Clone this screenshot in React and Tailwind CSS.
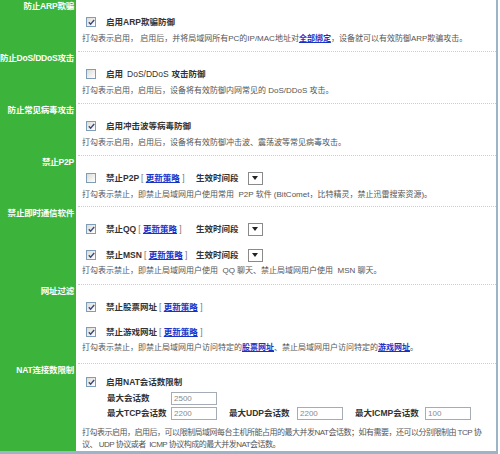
import React from 'react';

const font = "font-['Liberation_Sans','Noto_Sans_CJK_SC',sans-serif]";

const Check = ({ checked }) => (
  <span className="w-[10px] h-[10px] shrink-0 border border-[#7f9db9] bg-gradient-to-br from-[#dcdcd6] to-[#ffffff] flex items-center justify-center">
    {checked && (
      <svg width="7" height="7" viewBox="0 0 7 7">
        <path d="M0.8 3.2 L2.6 5.2 L6.2 1" fill="none" stroke="#3a4a7a" strokeWidth="1.4" />
      </svg>
    )}
  </span>
);

const Policy = () => (
  <span className="text-[#777] font-normal ml-[2px] whitespace-nowrap">
    [ <a className="text-[#1633c6] underline font-bold">更新策略</a> ]
  </span>
);

const Select = () => (
  <span className="w-[15px] h-[13px] border border-[#8a8a8a] bg-white flex items-center justify-center">
    <svg width="6" height="4" viewBox="0 0 6 4">
      <path d="M0 0 L6 0 L3 4 Z" fill="#222" />
    </svg>
  </span>
);

const Input = ({ value }) => (
  <span className="w-[46px] h-[13px] border border-[#a5acb5] bg-white text-[#8a8a8a] text-[8px] leading-[11px] pl-[2px] font-normal">
    {value}
  </span>
);

const Row = ({ checked, children, className = '' }) => (
  <div className={`h-[16px] flex items-center pl-[4px] whitespace-nowrap ${className}`}>
    <Check checked={checked} />
    <div className="ml-[10px] flex items-center font-bold text-[#333] text-[8.5px]">{children}</div>
  </div>
);

const Desc = ({ children, className = '' }) => (
  <div className={`text-[8px] leading-[12px] text-[#555] ${className}`}>{children}</div>
);

const Label = ({ children }) => (
  <div className="w-[76px] shrink-0 bg-[#3cb43c] text-right pr-[2px] text-white font-bold text-[8.5px] leading-[12px] whitespace-nowrap tracking-[-0.2px]">
    {children}
  </div>
);

const Section = ({ label, height, children }) => (
  <div className={`flex ${height}`}>
    <Label>{label}</Label>
    <div className="flex-1 ml-[2px] border-b border-dotted border-[#c2d4c8] pl-[4px] pr-[4px] pt-[14px]">
      {children}
    </div>
  </div>
);

const Named = ({ children }) => <span className="w-[90px] flex items-center">{children}</span>;

const TimeSel = () => (
  <div className="flex items-center">
    <span className="mr-[9px]">生效时间段</span>
    <Select />
  </div>
);

export default function App() {
  return (
    <div className={`w-[498px] h-[454px] bg-white border-r-2 border-b-[3px] border-[#9db3c6] overflow-hidden ${font}`}>
      <Section label="防止ARP欺骗" height="h-[52px]">
        <Row checked>启用ARP欺骗防御</Row>
        <Desc className="mt-[3px]">
          打勾表示启用， 启用后，并将局域网所有PC的IP/MAC地址对<a className="text-[#1633c6] underline font-bold">全部绑定</a>，设备就可以有效防御ARP欺骗攻击。
        </Desc>
      </Section>
      <Section label="防止DoS/DDoS攻击" height="h-[52px]">
        <Row>
          启用 <span className="font-normal ml-[4px] mr-[3px]">DoS/DDoS</span> 攻击防御
        </Row>
        <Desc className="mt-[3px]">打勾表示启用，启用后，设备将有效防御内网常见的 DoS/DDoS 攻击。</Desc>
      </Section>
      <Section label="防止常见病毒攻击" height="h-[52px]">
        <Row checked>启用冲击波等病毒防御</Row>
        <Desc className="mt-[3px]">打勾表示启用，启用后，设备将有效防御冲击波、震荡波等常见病毒攻击。</Desc>
      </Section>
      <Section label="禁止P2P" height="h-[51px]">
        <Row>
          <Named>禁止P2P<Policy /></Named>
          <TimeSel />
        </Row>
        <Desc className="mt-[3px]">打勾表示禁止，即禁止局域网用户使用常用&nbsp; P2P 软件 (BitComet，比特精灵，禁止迅雷搜索资源)。</Desc>
      </Section>
      <Section label="禁止即时通信软件" height="h-[78px]">
        <Row checked>
          <Named>禁止QQ<Policy /></Named>
          <TimeSel />
        </Row>
        <Row checked className="mt-[10px]">
          <Named>禁止MSN<Policy /></Named>
          <TimeSel />
        </Row>
        <Desc className="mt-[2px]">打勾表示禁止，即禁止局域网用户使用&nbsp; QQ 聊天、禁止局域网用户使用&nbsp; MSN 聊天。</Desc>
      </Section>
      <Section label="网址过滤" height="h-[79px]">
        <Row checked>
          禁止股票网址<Policy />
        </Row>
        <Row checked className="mt-[9px]">
          禁止游戏网址<Policy />
        </Row>
        <Desc className="mt-[2px]">
          打勾表示禁止，即禁止局域网用户访问特定的<a className="text-[#1633c6] underline font-bold">股票网址</a>、禁止局域网用户访问特定的<a className="text-[#1633c6] underline font-bold">游戏网址</a>。
        </Desc>
      </Section>
      <div className="flex h-[87px]">
        <Label>NAT连接数限制</Label>
        <div className="flex-1 ml-[2px] pl-[4px] pr-[2px] pt-[10px]">
          <Row checked>启用NAT会话数限制</Row>
          <div className="pl-[25px] font-bold text-[#333] text-[8.5px] whitespace-nowrap">
            <div className="h-[15px] flex items-center mt-[1px]">
              <span className="w-[64px]">最大会话数</span>
              <Input value="2500" />
            </div>
            <div className="h-[15px] flex items-center">
              <span className="w-[64px]">最大TCP会话数</span>
              <Input value="2200" />
              <span className="w-[68px] ml-[12px]">最大UDP会话数</span>
              <Input value="2200" />
              <span className="w-[70px] ml-[12px]">最大ICMP会话数</span>
              <Input value="100" />
            </div>
          </div>
          <Desc className="mt-[6px] tracking-[-0.5px]">
            打勾表示启用，启用后，可以限制局域网每台主机所能占用的最大并发NAT会话数；如有需要，还可以分别限制由&nbsp;TCP 协议、&nbsp;UDP 协议或者&nbsp; ICMP 协议构成的最大并发NAT会话数。
          </Desc>
        </div>
      </div>
    </div>
  );
}
